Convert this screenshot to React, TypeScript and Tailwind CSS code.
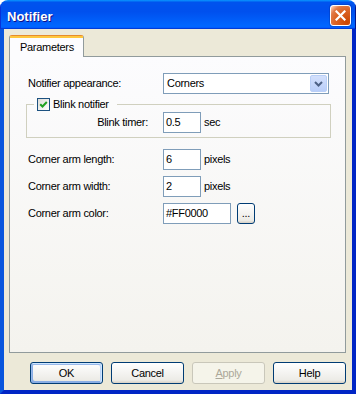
import React from "react";

function CloseButton() {
  return (
    <div className="mt-[5px] w-[21px] h-[21px] rounded-[3px] border border-white bg-[radial-gradient(circle_at_85%_85%,#cc4600_0%,#dc6527_55%,#e07a48_75%,#ffccb2_95%,#ffffff_100%)] flex items-center justify-center shadow-[0_0_0_1px_rgba(0,40,150,0.3)]">
      <svg width="11" height="11" viewBox="0 0 11 11">
        <path d="M1.5 1.5 L9.5 9.5 M9.5 1.5 L1.5 9.5" stroke="white" strokeWidth="2.2" strokeLinecap="square" />
      </svg>
    </div>
  );
}

function XpButton({ children, def, disabled }: { children: React.ReactNode; def?: boolean; disabled?: boolean }) {
  if (disabled) {
    return (
      <div className="w-[73px] h-[22px] rounded-[3px] border border-[#C9C7BA] bg-[#F5F4EA] flex items-center justify-center text-[#ACA899]">
        {children}
      </div>
    );
  }
  return (
    <div
      className={
        "w-[73px] h-[22px] rounded-[3px] border border-[#003C74] bg-[linear-gradient(180deg,#ffffff,#ECEBE6_86%,#D6D0C5)] flex items-center justify-center " +
        (def
          ? "shadow-[inset_-1px_1px_#cee7ff,inset_1px_2px_#98b8ea,inset_-2px_2px_#bcd4f6,inset_1px_-1px_#89ade4,inset_2px_-2px_#89ade4]"
          : "")
      }
    >
      {children}
    </div>
  );
}

function TextInput({ value, w }: { value: string; w: string }) {
  return (
    <div className={"h-[21px] border border-[#7F9DB9] bg-white flex items-center pl-[2px] " + w}>{value}</div>
  );
}

export default function App() {
  return (
    <div className="w-[356px] h-[394px] bg-white font-['Liberation_Sans',Arial,sans-serif] text-[11px] text-black tracking-[-0.3px]">
      <div className="w-full h-full flex flex-col rounded-t-[8px] overflow-hidden">
        <div className="h-[29px] shrink-0 flex items-start justify-between pl-[7px] pr-[5px] bg-[linear-gradient(180deg,#0997ff,#0053ee_8%,#0050ee_40%,#0066ff_88%,#0066ff_93%,#005bff_95%,#003dd7_96%,#003dd7)] shadow-[inset_1px_0_#0831d9,inset_-1px_0_#00138c]">
          <span className="mt-[9px] text-[13px] leading-[15px] font-bold tracking-normal text-white [text-shadow:1px_1px_#0f1089]">
            Notifier
          </span>
          <CloseButton />
        </div>
        <div className="flex-1 flex flex-col border-l-4 border-r-4 border-b-4 border-l-[#0855dd] border-r-[#0025c5] border-b-[#0025c5] bg-[#ECE9D8]">
          <div className="flex-1 flex flex-col pt-[6px] pl-[5px] pr-[6px] pb-[6px]">
            <div className="h-[21px] flex">
              <div className="relative z-10 w-[75px] h-[22px] rounded-t-[3px] border-x border-t border-x-[#919B9C] border-t-[#E68B2C] bg-[#FCFCFE] flex flex-col">
                <div className="h-[2px] bg-[#FFC73C]" />
                <div className="flex-1 flex items-center pl-[10px] pb-[1px]">Parameters</div>
              </div>
            </div>
            <div className="h-[297px] border border-[#919B9C] bg-[linear-gradient(180deg,#FCFCFE,#F4F3EE)] flex flex-col">
              <div className="mt-[16px] h-[21px] flex items-center">
                <div className="w-[153px] pl-[18px]">Notifier appearance:</div>
                <div className="w-[166px] h-[21px] border border-[#7F9DB9] bg-white flex items-center">
                  <div className="flex-1 pl-[3px]">Corners</div>
                  <div className="w-[17px] h-[17px] mr-[1px] rounded-[2px] border border-[#B9CFF7] bg-[linear-gradient(180deg,#D3E0FC,#B9CEF9)] flex items-center justify-center">
                    <svg width="9" height="6" viewBox="0 0 9 6">
                      <path d="M1 1 L4.5 4.5 L8 1" stroke="#4D6185" strokeWidth="2" fill="none" />
                    </svg>
                  </div>
                </div>
              </div>
              <div className="mt-[10px] ml-[16px] w-[305px] relative border border-[#D0D0BF] pt-[7px] pb-[4px]">
                <div className="absolute left-[7px] top-[-7px] h-[13px] flex items-center px-[3px] bg-[#FBFBFB] pr-[8px]">
                  <div className="w-[13px] h-[13px] border border-[#1C5180] bg-[linear-gradient(135deg,#DCDCD7,#FFFFFF)] flex items-center justify-center">
                    <svg width="9" height="9" viewBox="0 0 9 9">
                      <path d="M1.2 4.2 L3.5 6.5 L7.8 2" stroke="#21A121" strokeWidth="2" fill="none" />
                    </svg>
                  </div>
                  <span className="ml-[3px]">Blink notifier</span>
                </div>
                <div className="h-[21px] flex items-center">
                  <div className="w-[136px] text-right pr-[15px]">Blink timer:</div>
                  <TextInput value="0.5" w="w-[38px]" />
                  <span className="ml-[3px]">sec</span>
                </div>
              </div>
              <div className="mt-[11px] flex flex-col gap-[6px]">
                <div className="h-[21px] flex items-center">
                  <div className="w-[153px] pl-[18px]">Corner arm length:</div>
                  <TextInput value="6" w="w-[38px]" />
                  <span className="ml-[3px]">pixels</span>
                </div>
                <div className="h-[21px] flex items-center">
                  <div className="w-[153px] pl-[18px]">Corner arm width:</div>
                  <TextInput value="2" w="w-[38px]" />
                  <span className="ml-[3px]">pixels</span>
                </div>
                <div className="h-[21px] flex items-center">
                  <div className="w-[153px] pl-[18px]">Corner arm color:</div>
                  <TextInput value="#FF0000" w="w-[68px]" />
                  <div className="ml-[6px] w-[18px] h-[21px] rounded-[3px] border border-[#003C74] bg-[linear-gradient(180deg,#ffffff,#ECEBE6_86%,#D6D0C5)] flex items-end justify-center pb-[4px] leading-none">
                    ...
                  </div>
                </div>
              </div>
            </div>
            <div className="mt-[9px] flex justify-end gap-[8px]">
              <XpButton def>OK</XpButton>
              <XpButton>Cancel</XpButton>
              <XpButton disabled>
                <span>
                  <span className="underline">A</span>pply
                </span>
              </XpButton>
              <XpButton>Help</XpButton>
            </div>
          </div>
        </div>
      </div>
    </div>
  );
}
